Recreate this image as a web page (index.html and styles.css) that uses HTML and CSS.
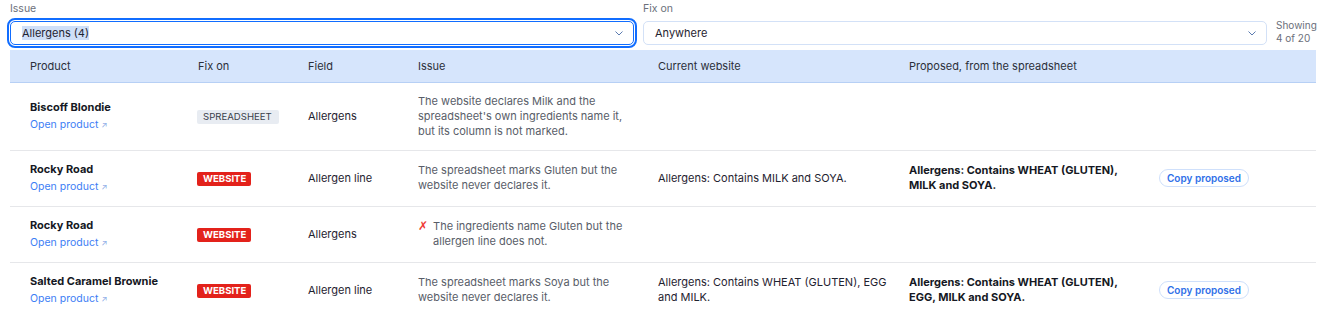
FILE: index.html
```html
<!DOCTYPE html>
<html>
<head>
<meta charset="utf-8">
<link rel="stylesheet" href="styles.css">
</head>
<body>
<div class="page">
  <div class="filters">
    <div class="field">
      <div class="label">Issue</div>
      <div class="select focused"><span class="sel-text">Allergens (4)</span>
        <svg class="chev" width="8" height="5" viewBox="0 0 8 5"><polyline points="0.5,0.5 4,4 7.5,0.5" fill="none" stroke="#5b7bb0" stroke-width="1"/></svg>
      </div>
    </div>
    <div class="field">
      <div class="label">Fix on</div>
      <div class="select"><span>Anywhere</span>
        <svg class="chev" width="8" height="5" viewBox="0 0 8 5"><polyline points="0.5,0.5 4,4 7.5,0.5" fill="none" stroke="#5b7bb0" stroke-width="1"/></svg>
      </div>
    </div>
    <div class="showing">Showing<br>4 of 20</div>
  </div>

  <table class="grid">
    <colgroup>
      <col class="c-product"><col class="c-fix"><col class="c-field"><col class="c-issue"><col class="c-current"><col class="c-proposed"><col class="c-action">
    </colgroup>
    <thead>
      <tr><th>Product</th><th>Fix on</th><th>Field</th><th>Issue</th><th>Current website</th><th>Proposed, from the spreadsheet</th><th></th></tr>
    </thead>
    <tbody>
      <tr class="r-tall">
        <td><div class="pname">Biscoff Blondie</div><a class="plink">Open product <span class="arr">↗</span></a></td>
        <td><span class="badge sheet">SPREADSHEET</span></td>
        <td>Allergens</td>
        <td class="issue">The website declares Milk and the spreadsheet's own ingredients name it, but its column is not marked.</td>
        <td></td><td></td><td></td>
      </tr>
      <tr>
        <td><div class="pname">Rocky Road</div><a class="plink">Open product <span class="arr">↗</span></a></td>
        <td><span class="badge web">WEBSITE</span></td>
        <td>Allergen line</td>
        <td class="issue">The spreadsheet marks Gluten but the website never declares it.</td>
        <td class="current">Allergens: Contains MILK and SOYA.</td>
        <td class="proposed">Allergens: Contains WHEAT (GLUTEN), MILK and SOYA.</td>
        <td><button class="copy">Copy proposed</button></td>
      </tr>
      <tr>
        <td><div class="pname">Rocky Road</div><a class="plink">Open product <span class="arr">↗</span></a></td>
        <td><span class="badge web">WEBSITE</span></td>
        <td>Allergens</td>
        <td class="issue"><div class="xrow"><span class="xmark">✗</span><span>The ingredients name Gluten but the allergen line does not.</span></div></td>
        <td></td><td></td><td></td>
      </tr>
      <tr>
        <td><div class="pname">Salted Caramel Brownie</div><a class="plink">Open product <span class="arr">↗</span></a></td>
        <td><span class="badge web">WEBSITE</span></td>
        <td>Allergen line</td>
        <td class="issue">The spreadsheet marks Soya but the website never declares it.</td>
        <td class="current">Allergens: Contains WHEAT (GLUTEN), EGG and MILK.</td>
        <td class="proposed">Allergens: Contains WHEAT (GLUTEN), EGG, MILK and SOYA.</td>
        <td><button class="copy">Copy proposed</button></td>
      </tr>
    </tbody>
  </table>
</div>
</body>
</html>
```

FILE: styles.css
```css
* { box-sizing: border-box; }
html, body { margin: 0; padding: 0; background: #fff; }
body {
  font-family: Inter, "Noto Sans", "Liberation Sans", sans-serif;
  font-size: 11px;
  color: #1f2330;
}
.page { padding: 0 10px; }

.filters {
  display: grid;
  grid-template-columns: 624px 624px auto;
  column-gap: 9px;
  align-items: end;
}
.label {
  font-size: 10.5px;
  color: #6b6f7a;
  height: 20px;
  line-height: 16px;
}
.select {
  height: 24px;
  border: 1px solid #d3e1f7;
  border-radius: 5px;
  display: flex;
  align-items: center;
  justify-content: space-between;
  padding: 0 10px 0 11px;
  font-size: 11px;
  color: #1f2330;
  background: #fff;
}
.select.focused {
  border-color: #116dff;
  outline: 2px solid #116dff;
  outline-offset: 1px;
}
.sel-text { background: #cfdff8; }
.chev { margin-top: 1px; }
.showing {
  font-size: 10px;
  line-height: 13px;
  color: #6b6f7a;
  align-self: center;
  margin-top: 19px;
}

.grid {
  margin-top: 5px;
  width: 1306px;
  border-collapse: collapse;
  table-layout: fixed;
}
.c-product { width: 168px; }
.c-fix { width: 110px; }
.c-field { width: 110px; }
.c-issue { width: 240px; }
.c-current { width: 251px; }
.c-proposed { width: 250px; }
.c-action { width: 177px; }

.grid th {
  background: #d6e5fc;
  border-bottom: 1px solid #b7d0f5;
  height: 32px;
  text-align: left;
  font-weight: 400;
  padding: 0 0 0 20px;
  color: #2b2f3a;
  font-size: 11px;
}
.grid td {
  padding: 11px 20px 11px 20px;
  vertical-align: middle;
  border-bottom: 1px solid #e6e7ea;
  line-height: 15px;
}
.grid tbody tr { height: 56px; }
.grid tbody tr.r-tall { height: 68px; }
.grid tbody tr:last-child td { border-bottom: none; }

.pname { font-weight: 700; color: #151823; }
.plink { display: block; margin-top: 2px; color: #3d7ef5; font-size: 10.5px; }
.arr { font-size: 8px; color: #8aa9e6; }

.badge {
  display: inline-block;
  font-size: 9.6px;
  line-height: 14px;
  padding: 0 6px;
  border-radius: 2px;
  margin-left: -1px;
}
.badge.sheet { background: #e8ecf2; color: #3a3f4b; padding: 0 7px 0 6px; }
.badge.web { background: #e3221b; color: #fff; font-weight: 700; padding: 0 5px 0 6px; }

.issue { color: #585d68; font-size: 11px; line-height: 14.5px; padding-right: 10px !important; }
.xrow { display: flex; gap: 5px; }
.xmark { color: #ef3b35; font-family: "DejaVu Sans", sans-serif; font-size: 12px; line-height: 14.5px; }
.current { color: #1f2330; padding-right: 0 !important; }
.proposed { font-weight: 700; color: #151823; padding-right: 8px !important; }

.copy {
  font-family: inherit;
  font-size: 10px;
  font-weight: 600;
  color: #2f6fe8;
  background: #fff;
  border: 1px solid #cfe0fb;
  border-radius: 10px;
  height: 18px;
  width: 90px;
  padding: 0;
}
```
